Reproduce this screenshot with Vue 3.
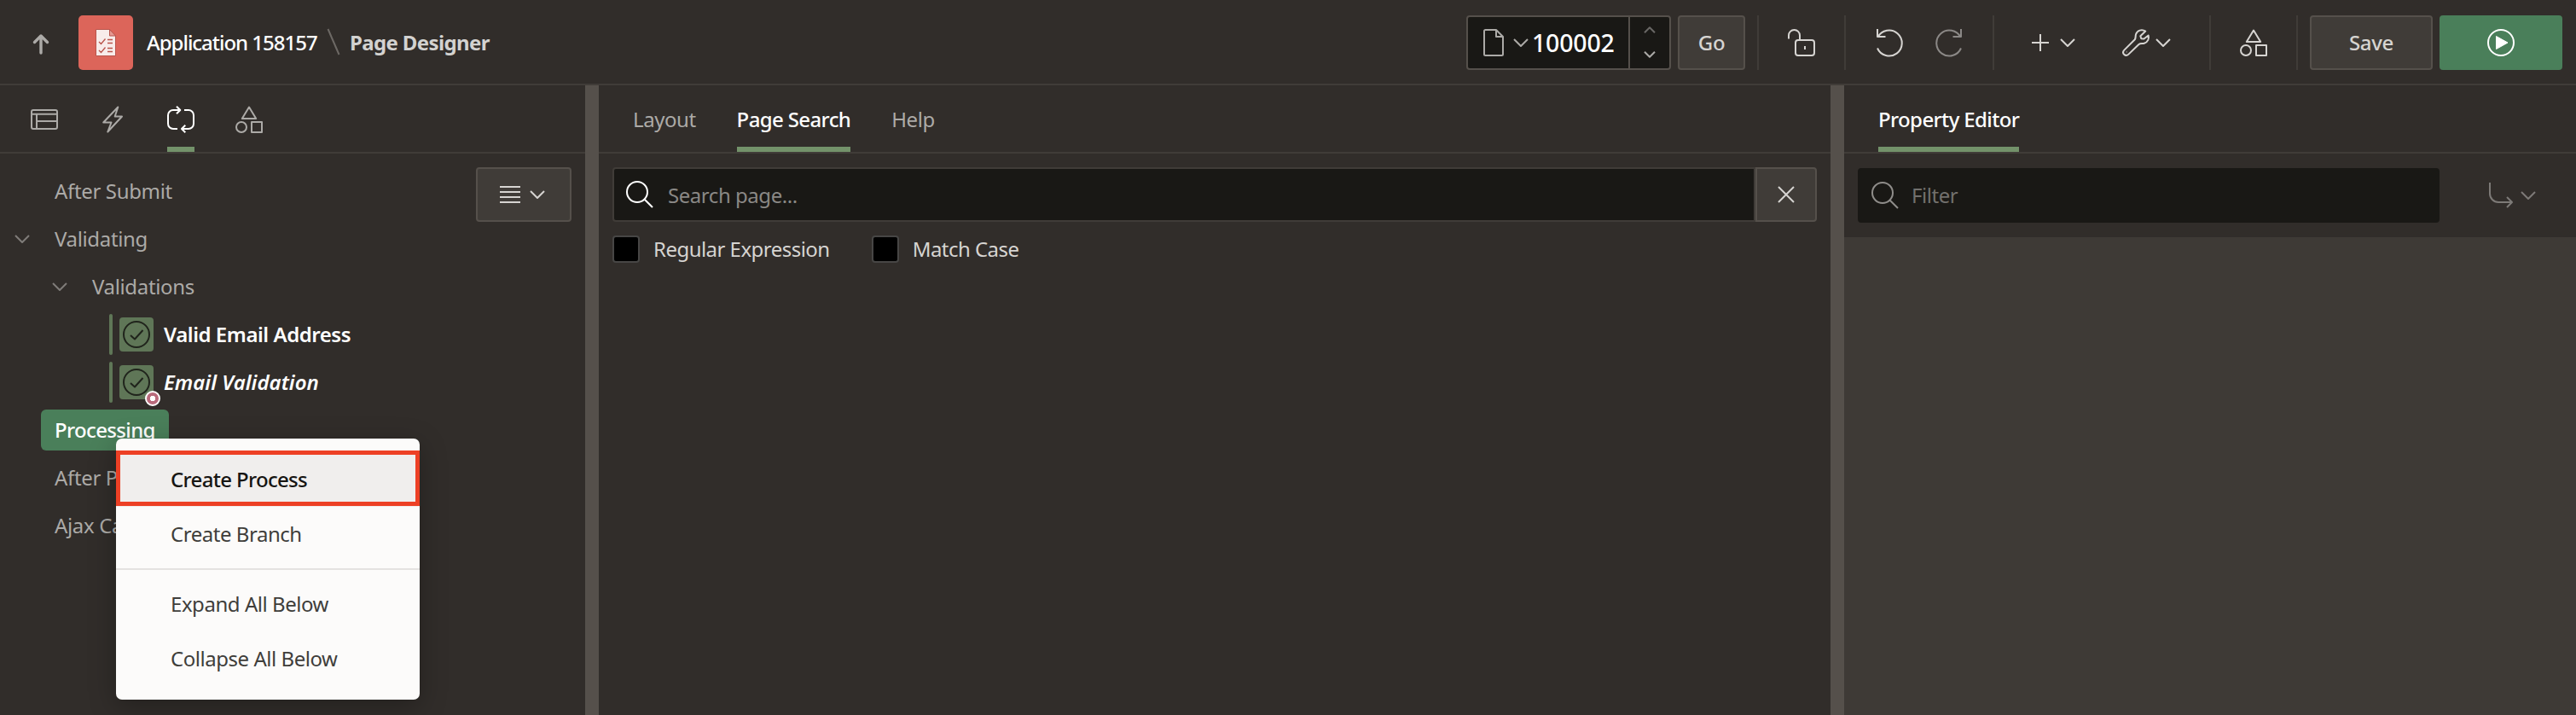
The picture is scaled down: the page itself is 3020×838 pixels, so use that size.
<script setup>
import { h } from 'vue'

const shapes = {
  up: [18, 22, 'M9 22V2M1.5 9.5L9 2l7.5 7.5'],
  slash: [16, 32, 'M1.5 1L14.5 31'],
  chevron: [18, 10, 'M1 1l8 8 8-8'],
  caretUp: [14, 8, 'M1 7.3l6-6 6 6'],
  caretDown: [14, 8, 'M1 .7l6 6 6-6'],
  layout: [32, 32, 'M3 5H29a2 2 0 0 1 2 2V25a2 2 0 0 1-2 2H3a2 2 0 0 1-2-2V7a2 2 0 0 1 2-2zM1 9.7H31M7 9.7V27M7 18H31'],
  bolt: [32, 32, 'M22.3 1.5L5.2 19.5H14.5L10.3 30.5 27 12.5H18.7z'],
  loop: [32, 32, 'M15 5H7a6 6 0 0 0-6 6v10a6 6 0 0 0 6 6h5M11 .7L15.3 5 11 9.3M20 5h5a6 6 0 0 1 6 6v10a6 6 0 0 1-6 6h-8M21.3 22.7L17 27l4.3 4.3'],
  shapes: [32, 32, 'M16 1.5L24.2 15H7.8zM13 25a6 6 0 1 1-12 0 6 6 0 1 1 12 0zM19 19H31V31H19z'],
  file: [24, 32, 'M15 1H2.5Q1 1 1 2.5V29.5Q1 31 2.5 31H21.5Q23 31 23 29.5V9zM15 1V9H23'],
  lock: [32, 32, 'M1 11.5V7.5a6.5 6.5 0 0 1 13 0V13M12 13H28a3 3 0 0 1 3 3V28a3 3 0 0 1-3 3H12a3 3 0 0 1-3-3V16a3 3 0 0 1 3-3zM20 20V24'],
  undo: [32, 32, 'M2 0V9H11.5M2.5 9.5A15 15 0 1 1 2 22.5'],
  redo: [32, 32, 'M30 0V9H20.5M29.5 9.5A15 15 0 1 0 30 22.5'],
  plus: [20, 20, 'M10 0V20M0 10H20'],
  wrench: [32, 32, 'M27.3 2.6C23-.2 17.5 1.5 16 6.2c-.7 2.3.2 4.6-1.4 6.3L2.4 24.6c-3.6 3.6 1.4 8.6 5 5L19.5 18c1.8-1.6 4-.5 6.3-1.3 4.5-1.5 6-5.7 4.9-9.2L25.5 11.5 22.3 11.3 21.3 8.2zM4.8 26.8h.6'],
  list: [24, 20, 'M0 1H24M0 7H24M0 13H24M0 19H24'],
  search: [32, 32, 'M25 13A12 12 0 1 1 1 13 12 12 0 1 1 25 13zM21.7 21.7L31 31'],
  close: [20, 20, 'M1 1L19 19M19 1L1 19'],
  branch: [28, 30, 'M1 0V13a10 10 0 0 0 10 10H27M21 17l6 6-6 6'],
  check: [32, 32, 'M31 16A15 15 0 1 1 1 16 15 15 0 1 1 31 16zM9 17L14 21.5 23.5 11'],
}

const Icon = ({ name }) => {
  const [w, ht, d] = shapes[name]
  return h('svg', { class: 'icon', width: w, height: ht, viewBox: `0 0 ${w} ${ht}`, 'aria-hidden': 'true' }, [h('path', { d })])
}
Icon.props = ['name']

const treeTabs = ['layout', 'bolt', 'loop', 'shapes']
const rows = [
  { label: 'After Submit', level: 0 },
  { label: 'Validating', level: 0, open: true },
  { label: 'Validations', level: 1, open: true },
  { label: 'Valid Email Address', level: 2, kind: 'strong' },
  { label: 'Email Validation', level: 2, kind: 'changed' },
  { label: 'Processing', level: 0, selected: true },
  { label: 'After Processing', level: 0 },
  { label: 'Ajax Callback', level: 0 },
]
</script>

<template>
  <div class="designer">
    <header class="bar">
      <Icon name="up" class="up" />
      <span class="app-logo">
        <svg width="24" height="32" viewBox="0 0 24 32">
          <path d="M.5.5H16.5L23.5 8V31.5H.5z" fill="#f8ecea" stroke="#b9554c" />
          <path d="M16.5.5V8H23.5z" fill="#e79a93" stroke="#b9554c" />
          <path d="M4 15l2.5 2.5L11.5 11.5M14 12.5h6M14 16.5h6M4 25l2.5 2.5L11.5 21.5M14 22.5h6M14 26.5h6" fill="none" stroke="#b9554c" stroke-width="1.3" />
        </svg>
      </span>
      <span class="app-name">Application 158157</span>
      <Icon name="slash" class="slash" />
      <span class="page-title">Page Designer</span>

      <div class="actions">
        <div class="page-field">
          <Icon name="file" /><Icon name="chevron" class="page-chevron" />
          <span class="page-number">100002</span>
          <span class="stepper"><Icon name="caretUp" class="dim" /><Icon name="caretDown" /></span>
        </div>
        <button class="btn go">Go</button>
        <i class="sep sep-a"></i>
        <Icon name="lock" class="lock" />
        <i class="sep sep-b"></i>
        <Icon name="undo" class="undo" />
        <Icon name="redo" class="redo" />
        <i class="sep sep-c"></i>
        <Icon name="plus" class="plus" /><Icon name="chevron" class="after-plus" />
        <Icon name="wrench" class="wrench" /><Icon name="chevron" class="after-wrench" />
        <i class="sep sep-d"></i>
        <Icon name="shapes" class="components" />
        <i class="sep sep-e"></i>
        <button class="btn save">Save</button>
        <button class="btn run">
          <svg width="32" height="32" viewBox="0 0 32 32">
            <circle cx="16" cy="16" r="15" fill="none" stroke="#fff" stroke-width="2" />
            <path d="M10.5 8.5L24 16 10.5 23.5z" fill="#fff" stroke="#fff" stroke-linejoin="round" />
          </svg>
        </button>
      </div>
    </header>

    <main class="panes">
      <section class="pane tree-pane">
        <nav class="tabs icon-tabs">
          <span v-for="t in treeTabs" :key="t" class="tab" :class="{ active: t === 'loop' }"><Icon :name="t" /></span>
        </nav>
        <div class="tree-body">
          <ul class="tree">
            <li v-for="r in rows" :key="r.label" class="row" :class="'level-' + r.level">
              <span class="toggle"><Icon v-if="r.open" name="chevron" /></span>
              <template v-if="r.kind">
                <i class="stripe"></i>
                <span class="kind"><Icon name="check" /><i v-if="r.kind === 'changed'" class="badge"></i></span>
              </template>
              <span class="label" :class="[r.kind, { selected: r.selected }]">{{ r.label }}</span>
            </li>
          </ul>
          <button class="btn menu-btn"><Icon name="list" /><Icon name="chevron" /></button>
        </div>
        <div class="context-menu">
          <div class="item focused">Create Process</div>
          <div class="item">Create Branch</div>
          <hr />
          <div class="item">Expand All Below</div>
          <div class="item">Collapse All Below</div>
        </div>
      </section>

      <div class="splitter"></div>

      <section class="pane search-pane">
        <nav class="tabs">
          <span class="tab">Layout</span>
          <span class="tab active">Page Search</span>
          <span class="tab">Help</span>
        </nav>
        <div class="search-row">
          <div class="search-input"><Icon name="search" /><span>Search page...</span></div>
          <button class="btn clear"><Icon name="close" /></button>
        </div>
        <div class="checks">
          <span class="check"><i class="box"></i>Regular Expression</span>
          <span class="check"><i class="box"></i>Match Case</span>
        </div>
      </section>

      <div class="splitter"></div>

      <section class="pane prop-pane">
        <nav class="tabs">
          <span class="tab active">Property Editor</span>
        </nav>
        <div class="filter-row">
          <div class="filter-input"><Icon name="search" /><span>Filter</span></div>
          <div class="goto"><Icon name="branch" /><Icon name="chevron" /></div>
        </div>
        <div class="prop-body"></div>
      </section>
    </main>
  </div>
</template>

<style>
body { margin: 0; background: #312d2a; }
</style>

<style scoped>
* { box-sizing: border-box; }
.designer {
  display: flex; flex-direction: column;
  width: 3020px; height: 838px; overflow: hidden;
  background: #312d2a; color: #acaaa7;
  font-family: "Noto Sans", "Open Sans", sans-serif;
  font-size: 24px; line-height: 32px; letter-spacing: -0.35px; white-space: nowrap;
}
.icon { flex: none; display: block; fill: none; stroke: currentColor; stroke-width: 2; stroke-linejoin: round; overflow: visible; }

.bar { flex: none; display: flex; align-items: center; height: 100px; padding: 0 16px 0 39px; border-bottom: 2px solid #403c38; }
.up { stroke-width: 3.4; stroke-linecap: round; margin-top: 4px; }
.app-logo { display: flex; align-items: center; justify-content: center; width: 64px; height: 64px; margin: 2px 16px 0 35px; border-radius: 5px; background: #dc655a; }
.app-name { width: 211px; margin-top: 2px; color: #fff; font-weight: 500; letter-spacing: -1.02px; }
.slash { color: #6d6965; }
.page-title { margin: 2px 0 0 11px; color: #d3d2d0; font-weight: 700; letter-spacing: -0.63px; }
.actions { display: flex; align-items: center; margin-left: auto; padding-top: 2px; color: #d6d4d1; }
.btn { display: flex; align-items: center; justify-content: center; height: 64px; padding: 0; border: 2px solid #55504b; border-radius: 4px; background: #403c38; color: #d6d4d1; font: inherit; font-weight: 500; letter-spacing: inherit; }
.page-field { display: flex; align-items: center; width: 240px; height: 64px; padding-left: 18px; border: 2px solid #55504b; border-radius: 4px; background: #191815; color: #acaaa7; }
.page-chevron { margin-left: 11px; }
.page-number { width: 117px; padding-left: 4px; color: #fff; font-size: 28.5px; font-weight: 500; letter-spacing: -0.2px; }
.stepper { display: flex; flex-direction: column; align-items: center; justify-content: space-between; align-self: stretch; flex: 1; padding: 11px 0 12px; border-left: 2px solid #55504b; }
.stepper .dim { opacity: .55; }
.go { width: 79px; margin-left: 8px; }
.sep { flex: none; width: 2px; height: 64px; background: #403c38; }
.sep-a { margin-left: 14px; }
.lock { margin-left: 34px; }
.sep-b { margin-left: 34px; }
.undo { margin-left: 35px; }
.redo { margin-left: 38px; opacity: .55; }
.sep-c { margin-left: 35px; }
.plus { margin-left: 44px; }
.after-plus { margin-left: 13px; }
.wrench { margin-left: 55px; }
.after-wrench { margin-left: 7px; }
.sep-d { margin-left: 45px; }
.components { margin-left: 34px; }
.sep-e { margin-left: 34px; }
.save { width: 144px; margin-left: 14px; }
.run { width: 144px; margin-left: 8px; border-color: #4a7f5a; background: #4a7f5a; }

.panes { flex: 1; display: flex; min-height: 0; }
.pane { display: flex; flex-direction: column; min-width: 0; }
.tree-pane { position: relative; width: 686px; }
.search-pane { width: 1444px; }
.prop-pane { flex: 1; }
.splitter { flex: none; width: 16px; background: #55504b; }

.tabs { flex: none; display: flex; gap: 48px; height: 80px; padding-left: 40px; border-bottom: 2px solid #403c38; }
.icon-tabs { padding-left: 36px; }
.tab { display: flex; align-items: center; padding-top: 8px; border-bottom: 6px solid transparent; letter-spacing: -0.45px; }
.tab.active { border-color: #73926a; color: #fff; font-weight: 500; letter-spacing: -0.62px; }

.tree-body { flex: 1; display: flex; padding: 16px 16px 0 17px; }
.tree { flex: 1; margin: 0; padding: 0; list-style: none; }
.row { display: flex; align-items: center; height: 56px; }
.level-1 { padding-left: 44px; }
.level-2 { padding-left: 80px; }
.toggle { flex: none; width: 31px; color: #7f7c79; }
.label { height: 48px; padding: 0 16px; border-radius: 6px; line-height: 47px; }
.label.strong, .label.changed { padding-left: 12px; color: #fff; font-weight: 600; letter-spacing: -0.45px; }
.label.changed { font-style: italic; letter-spacing: 0.05px; }
.label.selected { background: #4a7f5a; color: #fff; font-weight: 500; letter-spacing: -0.65px; }
.stripe { width: 4px; height: 48px; border-radius: 2px; background: #5f7657; }
.kind { position: relative; display: flex; align-items: center; justify-content: center; width: 40px; height: 40px; margin-left: 8px; border-radius: 4px; background: #5f7657; color: #20241c; }
.badge { position: absolute; right: -8px; bottom: -8px; width: 18px; height: 18px; border: 2px solid #fff; border-radius: 50%; background: radial-gradient(circle, #fff 0 3px, #b96a7c 3.5px); }
.menu-btn { width: 112px; padding-right: 3px; gap: 11px; }

.context-menu { position: absolute; left: 136px; top: 414px; width: 356px; padding: 16px 0; border-radius: 7px; background: #fcfbfa; color: #3f3e3b; letter-spacing: -0.46px; box-shadow: 0 8px 32px rgba(0, 0, 0, .28); }
.item { height: 64px; padding-left: 64px; line-height: 64px; }
.item.focused { position: relative; background: #f0eeed; color: #161513; font-weight: 500; letter-spacing: -0.67px; }
.item.focused::after { content: ""; position: absolute; inset: -2px 0 1px; border: 5px solid #ed4025; }
.context-menu hr { height: 2px; margin: 8px 0; border: 0; background: #e4e2e0; }

.search-row { display: flex; padding: 16px 16px 0; }
.search-input, .filter-input { display: flex; align-items: center; flex: 1; height: 64px; padding-left: 14px; border: 2px solid #403c38; border-radius: 4px 0 0 4px; background: #191815; color: #8a8885; letter-spacing: -0.45px; }
.search-input .icon { color: #fff; }
.search-input span { padding: 2px 0 0 17px; }
.filter-input span { padding-left: 15px; }
.clear { width: 72px; border-radius: 0 4px 4px 0; }
.checks { display: flex; gap: 49px; padding: 16px 16px 0; color: #d6d4d1; letter-spacing: -0.53px; }
.check { display: flex; align-items: center; gap: 16px; }
.box { width: 32px; height: 32px; border: 2px solid #474645; border-radius: 4px; background: #000; }

.filter-row { display: flex; align-items: center; height: 98px; padding: 0 47px 0 16px; }
.filter-input { flex: none; width: 682px; border-color: #191815; border-radius: 4px; color: #72706d; }
.filter-input .icon { color: #8f8d8a; }
.goto { display: flex; align-items: center; gap: 9px; margin-left: auto; color: #7d7a77; }
.prop-body { flex: 1; background: #3e3a36; }
</style>
